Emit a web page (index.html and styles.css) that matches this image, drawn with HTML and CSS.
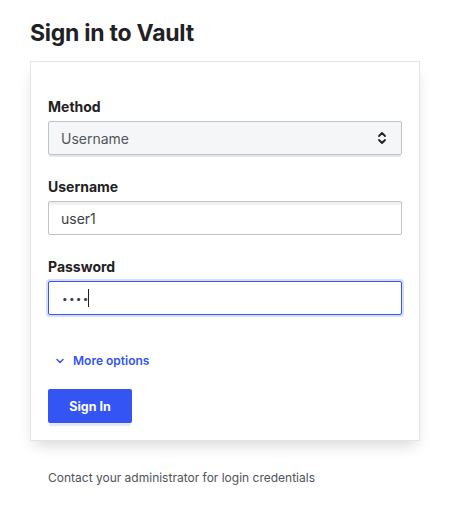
FILE: index.html
```html
<!DOCTYPE html>
<html lang="en">
<head>
<meta charset="utf-8">
<title>Sign in to Vault</title>
<link rel="stylesheet" href="styles.css">
</head>
<body>
<main class="page">
  <h1 class="title">Sign in to Vault</h1>
  <section class="card">
    <div class="field">
      <label class="label" for="method">Method</label>
      <div class="select-wrap">
        <select id="method" class="select">
          <option>Username</option>
        </select>
        <svg class="select-icon" width="10" height="16" viewBox="0 0 10 16" aria-hidden="true">
          <path d="M2 6 L5 3 L8 6" fill="none" stroke="#1f2124" stroke-width="1.8" stroke-linecap="round" stroke-linejoin="round"/>
          <path d="M2 10 L5 13 L8 10" fill="none" stroke="#1f2124" stroke-width="1.8" stroke-linecap="round" stroke-linejoin="round"/>
        </svg>
      </div>
    </div>
    <div class="field">
      <label class="label" for="username">Username</label>
      <input id="username" class="input input-inset" type="text" value="user1">
    </div>
    <div class="field">
      <label class="label">Password</label>
      <div class="input input-focus" role="textbox"><span class="dots">••••</span><span class="caret"></span></div>
    </div>
    <button class="more" type="button">
      <svg class="more-icon" width="8" height="6" viewBox="0 0 8 6" aria-hidden="true">
        <path d="M1 1.5 L4 4.5 L7 1.5" fill="none" stroke="#3454f4" stroke-width="1.5" stroke-linecap="round" stroke-linejoin="round"/>
      </svg>
      <span>More options</span>
    </button>
    <button class="btn" type="button">Sign In</button>
  </section>
  <p class="footer">Contact your administrator for login credentials</p>
</main>
</body>
</html>
```

FILE: styles.css
```css
* { box-sizing: border-box; }

body {
  margin: 0;
  background: #ffffff;
  font-family: Inter, "Noto Sans", "Liberation Sans", sans-serif;
  color: #1f2124;
}

.page {
  width: 390px;
  margin-left: 30px;
  padding-top: 19px;
}

.title {
  margin: 0 0 14px;
  font-size: 23px;
  line-height: 28px;
  font-weight: 700;
  letter-spacing: -0.25px;
  color: #1f2124;
}

.card {
  display: flex;
  flex-direction: column;
  align-items: flex-start;
  border: 1px solid #e3e4e7;
  padding: 36px 17px 17px;
  background: #fff;
  box-shadow: 0 8px 14px -4px rgba(0, 0, 0, 0.16);
}

.field {
  display: flex;
  flex-direction: column;
  gap: 5px;
  width: 100%;
  margin-bottom: 23px;
}

.label {
  font-size: 14px;
  line-height: 18px;
  font-weight: 700;
  color: #1f2124;
}

.select-wrap {
  position: relative;
  width: 100%;
}

.select {
  appearance: none;
  -webkit-appearance: none;
  display: block;
  width: 100%;
  height: 34px;
  margin: 0;
  padding: 0 12px;
  border: 1px solid #bfc3cb;
  border-radius: 2px;
  background: #f5f6f8;
  font-family: inherit;
  font-size: 14px;
  color: #52565e;
  box-shadow: 0 3px 1px -1px rgba(0, 0, 0, 0.1);
}

.select-icon {
  position: absolute;
  right: 15px;
  top: 9px;
}

.input {
  display: flex;
  align-items: center;
  width: 100%;
  height: 34px;
  margin: 0;
  padding: 0 12px;
  border: 1px solid #bfc3cb;
  border-radius: 2px;
  background: #fff;
  font-family: inherit;
  font-size: 14px;
  color: #3b3e45;
  outline: none;
}

.input-inset {
  box-shadow: inset 0 4px 1px -1px rgba(0, 0, 0, 0.06);
}

.input-focus {
  border-color: #3454f4;
  box-shadow: 0 0 0 2px #d6defd;
}

.dots {
  font-size: 10px;
  letter-spacing: 1.3px;
  color: #3b3e45;
  padding-left: 1px;
}

.caret {
  width: 1px;
  height: 18px;
  margin-left: -2px;
  background: #1f2124;
}

.more {
  display: flex;
  align-items: center;
  gap: 9px;
  margin: 14px 0 0;
  padding: 0 0 0 8px;
  border: 0;
  background: none;
  font-family: inherit;
  font-size: 12px;
  line-height: 18px;
  font-weight: 600;
  color: #3454f4;
}

.btn {
  margin-top: 19px;
  width: 84px;
  height: 34px;
  border: 0;
  border-radius: 2px;
  background: #3454f4;
  color: #fff;
  font-family: inherit;
  font-size: 12.5px;
  font-weight: 700;
  box-shadow: 0 4px 1px -1px rgba(0, 0, 0, 0.09);
}

.footer {
  margin: 28px 0 0 18px;
  font-size: 12px;
  line-height: 18px;
  color: #4f535b;
}
```
